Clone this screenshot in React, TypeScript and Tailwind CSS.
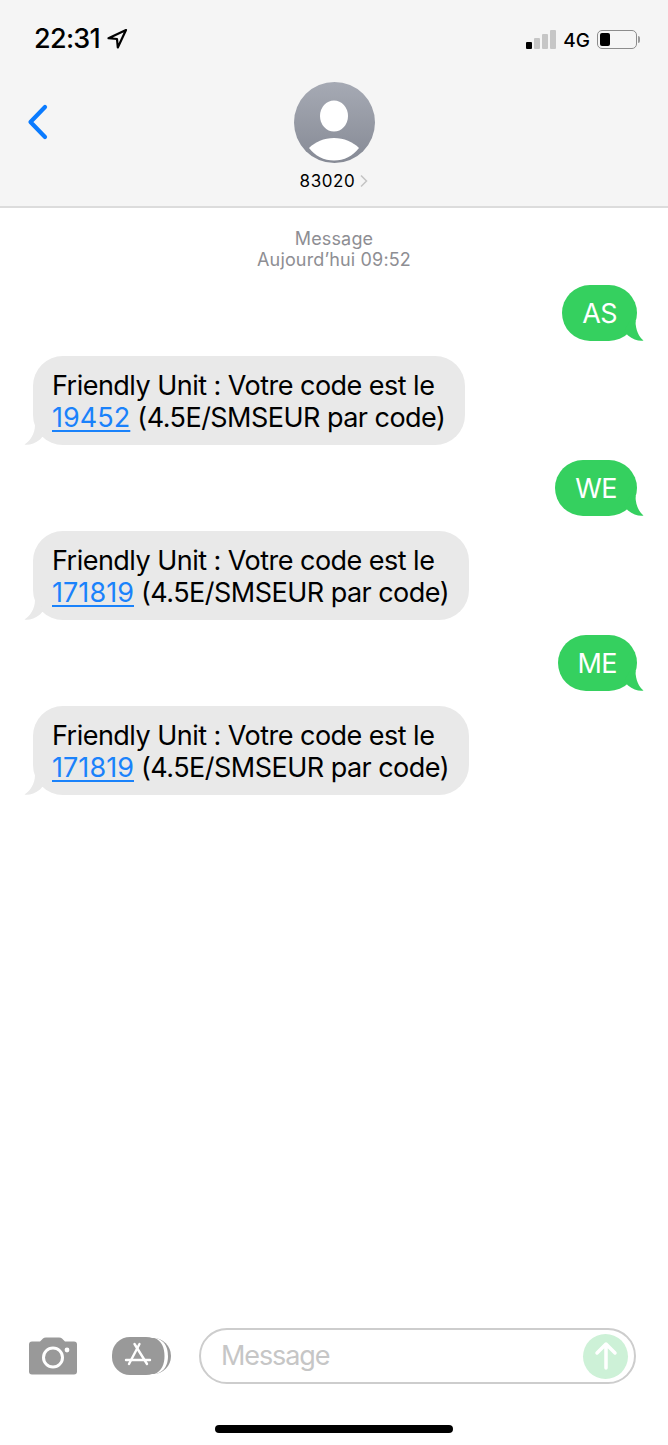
import { ReactNode } from "react";

const font = "font-['Inter','Roboto',sans-serif]";

function LocationArrow() {
  return (
    <svg width="22" height="22" viewBox="0 0 22 22" fill="none">
      <path d="M20 2 L2.5 10.2 L11 11 L11.8 19.5 Z" stroke="#000" strokeWidth="2.2" strokeLinejoin="round" />
    </svg>
  );
}

function StatusBar() {
  return (
    <div className="flex items-center justify-between pl-[34px] pr-[28px] pt-[25px] h-[53px]">
      <div className="flex items-center gap-[6px]">
        <span className="text-[27px] font-medium leading-[28px] tracking-[-0.7px] text-black">22:31</span>
        <LocationArrow />
      </div>
      <div className="flex items-center">
        <div className="flex items-end gap-[2px] h-[19px]">
          <div className="w-[6px] h-[7px] rounded-[1px] bg-black" />
          <div className="w-[6px] h-[11px] rounded-[1px] bg-[#c6c6c6]" />
          <div className="w-[6px] h-[15px] rounded-[1px] bg-[#c6c6c6]" />
          <div className="w-[6px] h-[19px] rounded-[1px] bg-[#c6c6c6]" />
        </div>
        <span className="ml-[7px] pt-[3px] text-[19px] font-medium leading-[20px] text-black">4G</span>
        <div className="ml-[7px] flex items-center">
          <div className="w-[40px] h-[19px] rounded-[5px] border-[1.5px] border-[#8c8c8c] p-[2px]">
            <div className="w-[10px] h-full rounded-[2px] bg-black" />
          </div>
          <div className="ml-[1px] w-[2px] h-[7px] rounded-r-[2px] bg-[#9a9a9a]" />
        </div>
      </div>
    </div>
  );
}

function Avatar() {
  return (
    <svg width="81" height="81" viewBox="0 0 81 81">
      <defs>
        <linearGradient id="av" x1="0" y1="0" x2="0" y2="1">
          <stop offset="0" stopColor="#a6aab4" />
          <stop offset="1" stopColor="#868a95" />
        </linearGradient>
        <clipPath id="avc">
          <circle cx="40.5" cy="40.5" r="40.5" />
        </clipPath>
      </defs>
      <circle cx="40.5" cy="40.5" r="40.5" fill="url(#av)" />
      <g clipPath="url(#avc)">
        <ellipse cx="40" cy="34" rx="14" ry="15.5" fill="#fff" />
        <path d="M15 66 C21 60 30 56 40 56 C50 56 59 60 65 66 C59 74 50 78.500 40 78.500 C30 78.500 21 74 15 66 Z" fill="#fff" />
      </g>
    </svg>
  );
}

function Header() {
  return (
    <header className="h-[208px] shrink-0 bg-[#f5f5f5] border-b-2 border-[#dcdcdc]">
      <StatusBar />
      <div className="grid grid-cols-[1fr_auto_1fr] pt-[29px]">
        <div className="pl-[27px] pt-[22px]">
          <svg width="21" height="36" viewBox="0 0 21 36" fill="none">
            <path d="M18 3 L3.500 18 L18 33" stroke="#0a7bff" strokeWidth="4.200" strokeLinecap="round" strokeLinejoin="round" />
          </svg>
        </div>
        <div className="flex flex-col items-center">
          <Avatar />
          <div className="mt-[6px] flex items-center gap-[5px]">
            <span className="text-[17px] leading-[24px] text-black tracking-[0.6px]">83020</span>
            <svg width="8" height="14" viewBox="0 0 8 14" fill="none">
              <path d="M1 1.500 L6.500 7 L1 12.500" stroke="#c4c4c4" strokeWidth="1.500" />
            </svg>
          </div>
        </div>
        <div />
      </div>
    </header>
  );
}

function Sent({ children }: { children: ReactNode }) {
  return (
    <div className="flex justify-end pr-[31px]">
      <div className="relative h-[56px] rounded-[28px] bg-[#35d05f] pl-[20px] pr-[20px] pt-[3px] flex items-center text-[27px] tracking-[-0.6px] text-white">
        {children}
        <svg className="absolute right-[-7px] bottom-0" width="24" height="20" viewBox="0 0 24 20">
          <path d="M10 0 L15.500 0 C15.500 9 19 16 23.500 19.600 C19 20.400 13 18.500 8 14.500 L4 10 Z" fill="#35d05f" />
        </svg>
      </div>
    </div>
  );
}

function Received({ code }: { code: string }) {
  return (
    <div className="flex justify-start pl-[33px]">
      <div className="relative rounded-[30px] bg-[#e9e9e9] pl-[19px] pr-[20px] pt-[14px] pb-[11px] text-[27px] leading-[32px] tracking-[-0.53px] text-black whitespace-nowrap">
        <div>Friendly Unit : Votre code est le</div>
        <div>
          <span className="text-[#1a82fb] tracking-[0.05px] underline underline-offset-[3px] decoration-[1.5px]">{code}</span> (4.5E/SMSEUR par code)
        </div>
        <svg className="absolute left-[-9px] bottom-0" width="24" height="20" viewBox="0 0 24 20">
          <path d="M14 0 L11 0 C11 9 6 16 0.500 19.600 C5 20.400 11 18.500 16 14.500 L20 10 Z" fill="#e9e9e9" />
        </svg>
      </div>
    </div>
  );
}

function CameraIcon() {
  return (
    <svg width="48" height="38" viewBox="0 0 48 38">
      <path
        fill="#999"
        d="M3 4.500 H11 L14 1.500 Q15 0.500 17 0.500 H30 Q32 0.500 33 1.500 L36 4.500 H45 Q48 4.500 48 7.500 V34.500 Q48 37.500 45 37.500 H3 Q0 37.500 0 34.500 V7.500 Q0 4.500 3 4.500 Z"
      />
      <circle cx="24" cy="20.500" r="9.500" fill="none" stroke="#fff" strokeWidth="3" />
      <circle cx="38" cy="13" r="2.400" fill="#fff" />
    </svg>
  );
}

function AppsIcon() {
  return (
    <svg width="60" height="38" viewBox="0 0 60 38" fill="none">
      <rect x="22" y="1" width="37" height="36" rx="18" fill="#999" />
      <rect x="0" y="0" width="52" height="38" rx="18" fill="#999" stroke="#fff" strokeWidth="0" />
      <path d="M42 0.500 C54 3 56 12 56 19 C56 26 54 35 42 37.500 C50 34 52.500 27 52.500 19 C52.500 11 50 4 42 0.500 Z" fill="#fff" />
      <g stroke="#fff" strokeWidth="2.400" strokeLinecap="round">
        <path d="M27.500 7 L17 27" />
        <path d="M22.500 7 L35 27" />
        <path d="M14 23 H38" />
      </g>
    </svg>
  );
}

function Composer() {
  return (
    <div className="flex items-center pl-[29px] pr-[32px]">
      <CameraIcon />
      <div className="ml-[35px]">
        <AppsIcon />
      </div>
      <div className="ml-[27px] flex-1 h-[56px] rounded-[28px] border-2 border-[#cdcdcd] flex items-center justify-between pl-[20px] pr-[6px]">
        <span className="text-[27px] tracking-[-1.1px] text-[#c6c6c6]">Message</span>
        <div className="w-[45px] h-[45px] rounded-full bg-[#cdf1d7] flex items-center justify-center">
          <svg width="24" height="30" viewBox="0 0 24 30" fill="none">
            <path d="M12 27 V3 M3 12 L12 3 L21 12" stroke="#fff" strokeWidth="3.500" strokeLinecap="round" strokeLinejoin="round" />
          </svg>
        </div>
      </div>
    </div>
  );
}

export default function App() {
  return (
    <div className={`${font} w-[668px] h-[1445px] bg-white flex flex-col overflow-hidden`}>
      <Header />
      <div className="pt-[20px] text-center text-[18px] leading-[21px] tracking-[0.15px] text-[#8e8e93]">
        <div>Message</div>
        <div>Aujourd’hui 09:52</div>
      </div>
      <div className="mt-[15px] flex flex-col gap-[15px]">
        <Sent>AS</Sent>
        <Received code="19452" />
        <Sent>WE</Sent>
        <Received code="171819" />
        <Sent>ME</Sent>
        <Received code="171819" />
      </div>
      <div className="mt-auto pb-[12px]">
        <Composer />
        <div className="mt-[41px] mx-auto w-[238px] h-[8px] rounded-full bg-black" />
      </div>
    </div>
  );
}
